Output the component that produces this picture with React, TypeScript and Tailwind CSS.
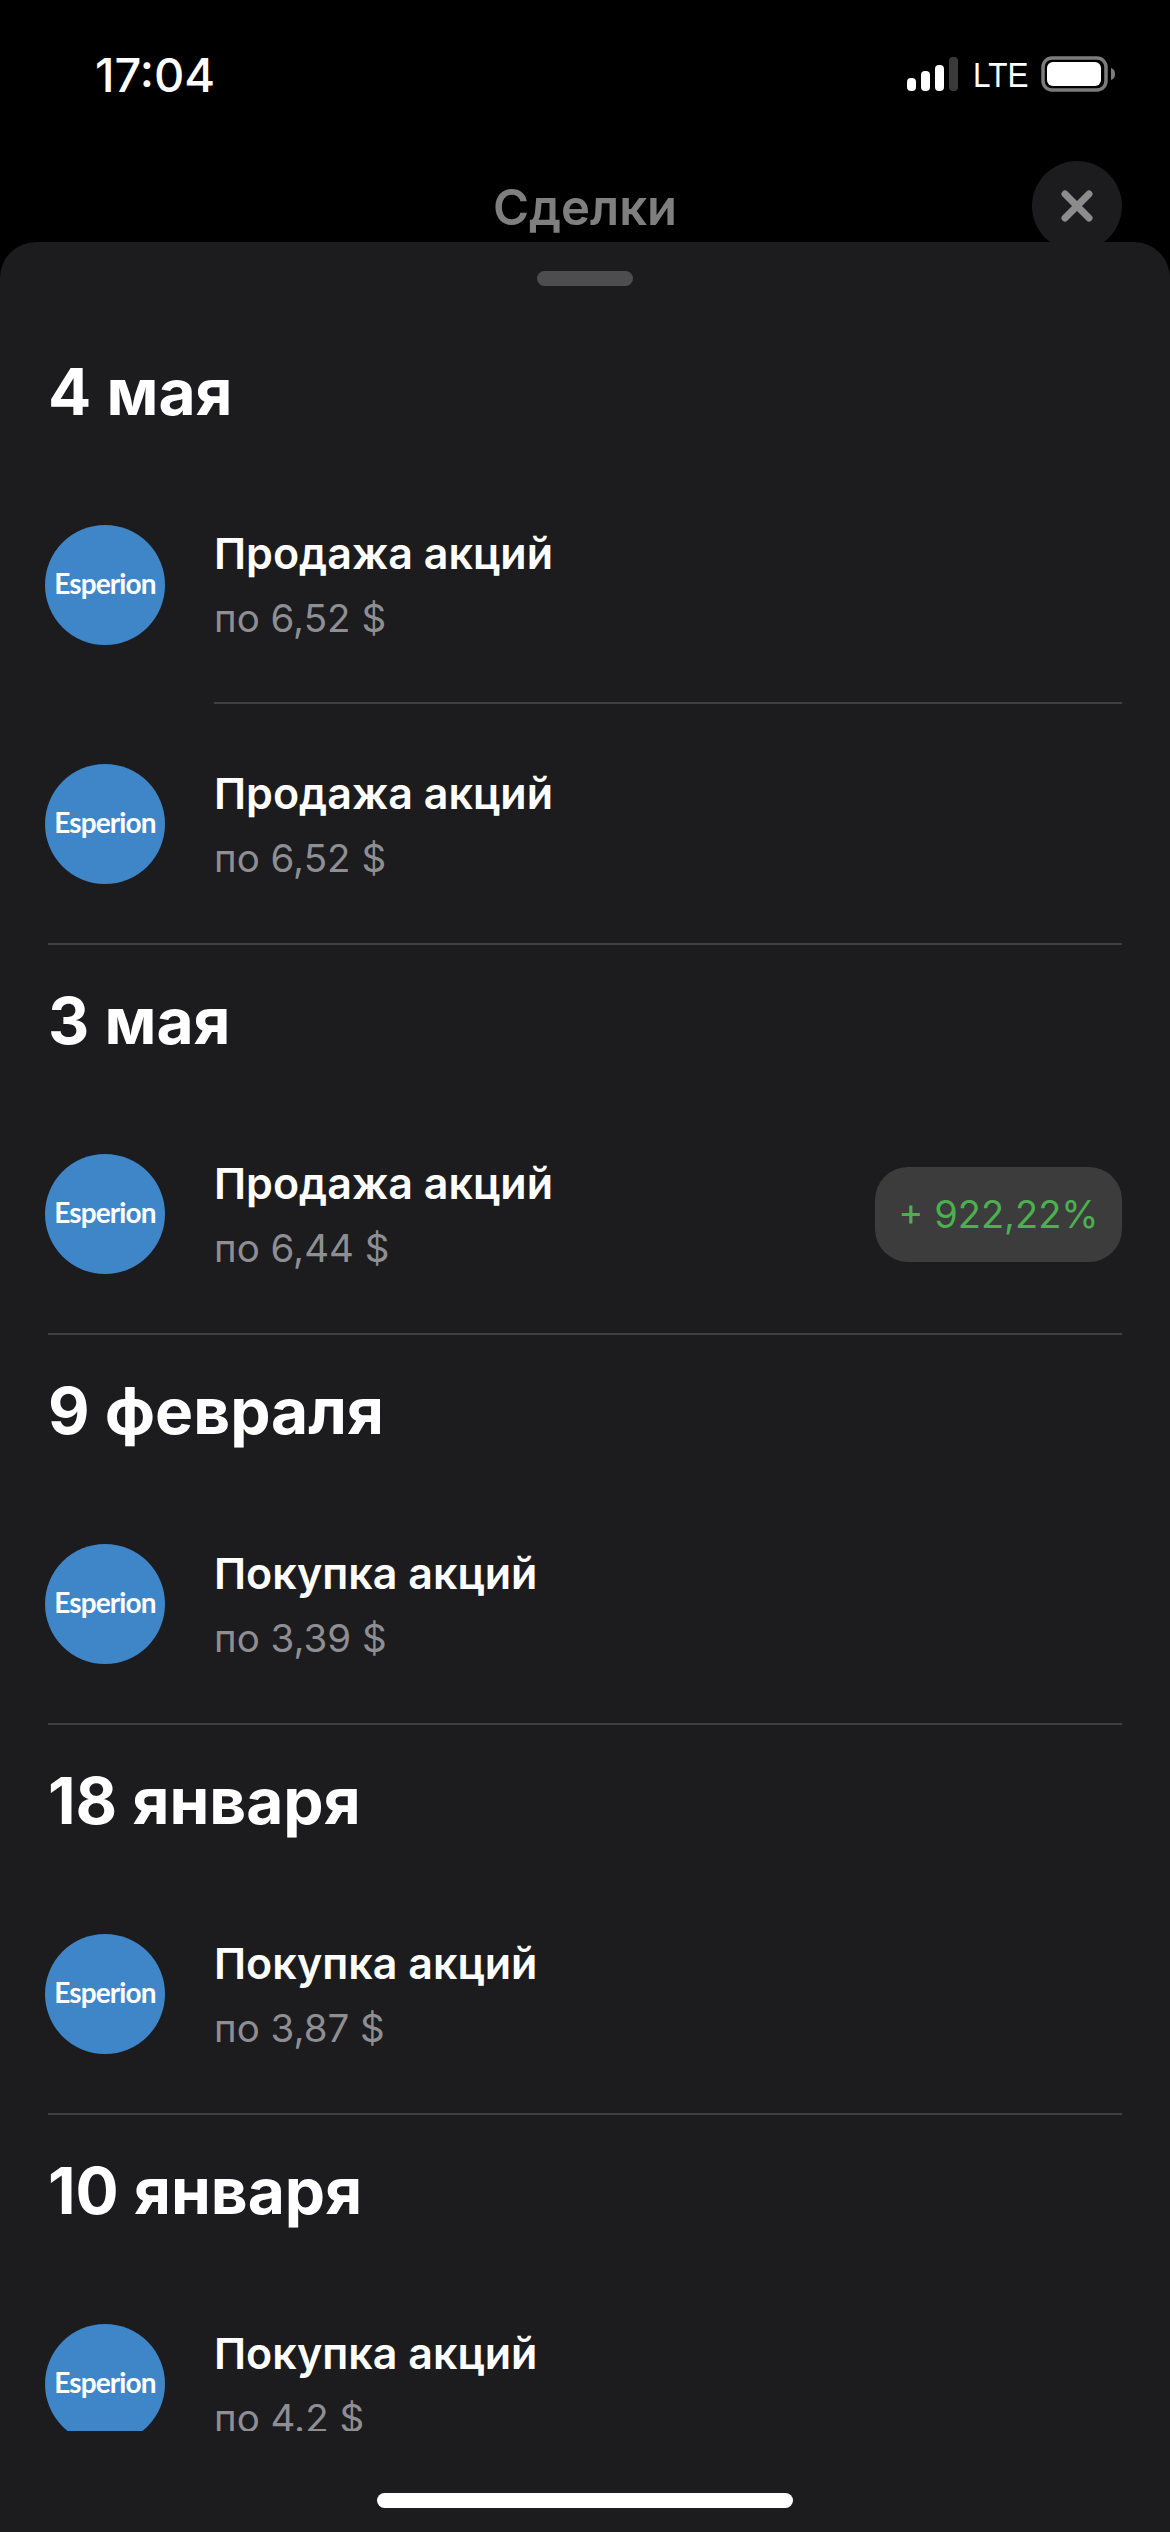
import React from 'react';

type Deal = { title: string; price: string; badge?: string };
type Section = { date: string; deals: Deal[] };

const sections: Section[] = [
    {
        date: '4 мая',
        deals: [
            { title: 'Продажа акций', price: 'по 6,52 $' },
            { title: 'Продажа акций', price: 'по 6,52 $' },
        ],
    },
    { date: '3 мая', deals: [{ title: 'Продажа акций', price: 'по 6,44 $', badge: '+ 922,22%' }] },
    { date: '9 февраля', deals: [{ title: 'Покупка акций', price: 'по 3,39 $' }] },
    { date: '18 января', deals: [{ title: 'Покупка акций', price: 'по 3,87 $' }] },
    { date: '10 января', deals: [{ title: 'Покупка акций', price: 'по 4.2 $' }] },
];

const StatusIcons: React.FC = () => (
    <div className="flex items-center">
        <svg width="52" height="36" viewBox="0 0 52 36" fill="none">
            <rect x="0" y="22" width="9" height="13" rx="4" fill="#fff" />
            <rect x="14" y="15" width="9" height="20" rx="4" fill="#fff" />
            <rect x="28" y="9" width="9" height="26" rx="4" fill="#fff" />
            <rect x="42" y="1" width="9" height="34" rx="4" fill="#3a3a3a" />
        </svg>
        <span className="ml-[14px] w-[52px] text-[35px] leading-none font-medium text-white font-['Liberation_Sans',sans-serif] [transform:scaleX(0.9)] origin-left">
            LTE
        </span>
        <svg className="ml-[16px]" width="75" height="36" viewBox="0 0 75 36" fill="none">
            <rect x="2" y="2" width="63" height="32" rx="9" stroke="#7c7c7c" strokeWidth="3.5" />
            <rect x="6" y="6" width="54" height="24" rx="6" fill="#fff" />
            <path d="M70 12 C73 13 74 15 74 18 C74 21 73 23 70 24 Z" fill="#7c7c7c" />
        </svg>
    </div>
);

const EsperionLogo: React.FC = () => (
    <div className="w-[120px] h-[120px] shrink-0 rounded-full bg-[#3f86c9] flex items-center justify-center pb-[3px]">
        <span className="text-[28px] leading-none font-bold tracking-[-0.9px] text-white font-['Lato',sans-serif]">
            Esperion
        </span>
    </div>
);

const DealRow: React.FC<{ deal: Deal; inset: boolean }> = ({ deal, inset }) => (
    <div className="flex items-center h-[239px] -ml-[3px]">
        <EsperionLogo />
        <div className={`ml-[49px] flex-1 self-stretch flex items-center ${inset ? 'border-b-2 border-[#3f3f41]' : ''}`}>
            <div className="flex-1 min-w-0 pt-[4px]">
                <div className="text-[43px] leading-[50px] font-semibold text-white">{deal.title}</div>
                <div className="mt-[15px] text-[38.5px] leading-[50px] text-[#8e8e93]">{deal.price}</div>
            </div>
            {deal.badge && (
                <div className="mt-[2px] w-[247px] h-[95px] rounded-[33px] bg-[#3c3c3c] flex items-center justify-center text-[38px] text-[#4caf50]">
                    {deal.badge}
                </div>
            )}
        </div>
    </div>
);

const App: React.FC = () => {
    return (
        <div className="w-[1170px] h-[2532px] bg-black flex flex-col overflow-hidden font-['Inter',sans-serif]">
            {/* Status bar */}
            <div className="h-[148px] shrink-0 flex items-center justify-between pl-[95px] pr-[54px]">
                <span className="text-[47px] font-medium leading-none text-white">17:04</span>
                <StatusIcons />
            </div>

            {/* Title */}
            <div className="h-[116px] shrink-0 grid grid-cols-[1fr_auto_1fr] items-center px-[48px]">
                <div />
                <span className="pt-[2px] text-[49px] font-semibold leading-none text-[#7f7f7f]">Сделки</span>
                <div className="justify-self-end w-[90px] h-[90px] rounded-full bg-[#1c1c1e] flex items-center justify-center">
                    <svg width="34" height="34" viewBox="0 0 34 34" fill="none">
                        <path d="M5 5 L29 29 M29 5 L5 29" stroke="#8c8c8c" strokeWidth="7" strokeLinecap="round" />
                    </svg>
                </div>
            </div>

            {/* Sheet */}
            <div className="relative -mt-[22px] flex-1 min-h-0 rounded-t-[36px] bg-[#1c1c1e] flex flex-col">
                <div className="h-[74px] shrink-0 flex justify-center pt-[29px]">
                    <div className="w-[96px] h-[15px] rounded-full bg-[#4d4d4f]" />
                </div>
                <div className="h-[2115px] shrink-0 overflow-hidden">
                    {sections.map((section) => (
                        <div key={section.date} className="mx-[48px] border-b-2 border-[#3f3f41]">
                            <h2 className="h-[149px] pt-[2px] flex items-center text-[64px] font-bold leading-none text-white">
                                {section.date}
                            </h2>
                            {section.deals.map((deal, i) => (
                                <DealRow key={i} deal={deal} inset={i < section.deals.length - 1} />
                            ))}
                        </div>
                    ))}
                </div>
                <div className="flex-1 flex justify-center pt-[62px]">
                    <div className="w-[416px] h-[15px] rounded-full bg-white" />
                </div>
            </div>
        </div>
    );
};

export default App;
